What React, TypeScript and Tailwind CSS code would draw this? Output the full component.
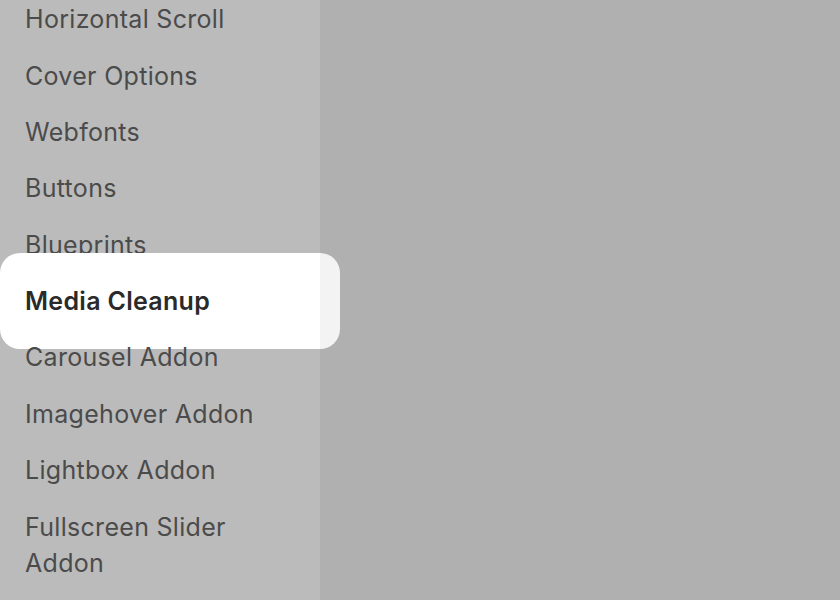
import React from "react";

const items = [
  "Horizontal Scroll",
  "Cover Options",
  "Webfonts",
  "Buttons",
  "Blueprints",
  "Media Cleanup",
  "Carousel Addon",
  "Imagehover Addon",
  "Lightbox Addon",
  "Fullscreen Slider Addon",
];

export default function App() {
  return (
    <div className="flex h-[600px] w-[840px] overflow-hidden bg-[#b0b0b0] font-['Inter','Liberation_Sans',sans-serif]">
      <aside className="relative w-[320px] shrink-0 bg-[#bbbbbb]">
        <ul className="-mt-[9px] flex flex-col">
          {items.map((item) => (
            <li
              key={item}
              className="relative px-[25px] py-[10.2px] text-[25px] leading-[36px] tracking-[0.3px] text-[#4b4b4b]"
            >
              {item === "Media Cleanup" ? (
                <>
                  {/* highlighted row pops out over the page edge */}
                  <div className="absolute top-1/2 left-0 z-0 h-[96px] w-[340px] -translate-y-1/2 rounded-[20px] bg-[linear-gradient(to_right,#ffffff_320px,#f3f3f3_320px)]" />
                  <span className="relative z-10 font-semibold text-[#2a2a2a]">
                    {item}
                  </span>
                </>
              ) : (
                <span className="block w-[262px]">{item}</span>
              )}
            </li>
          ))}
        </ul>
      </aside>
      <main className="flex-1" />
    </div>
  );
}
